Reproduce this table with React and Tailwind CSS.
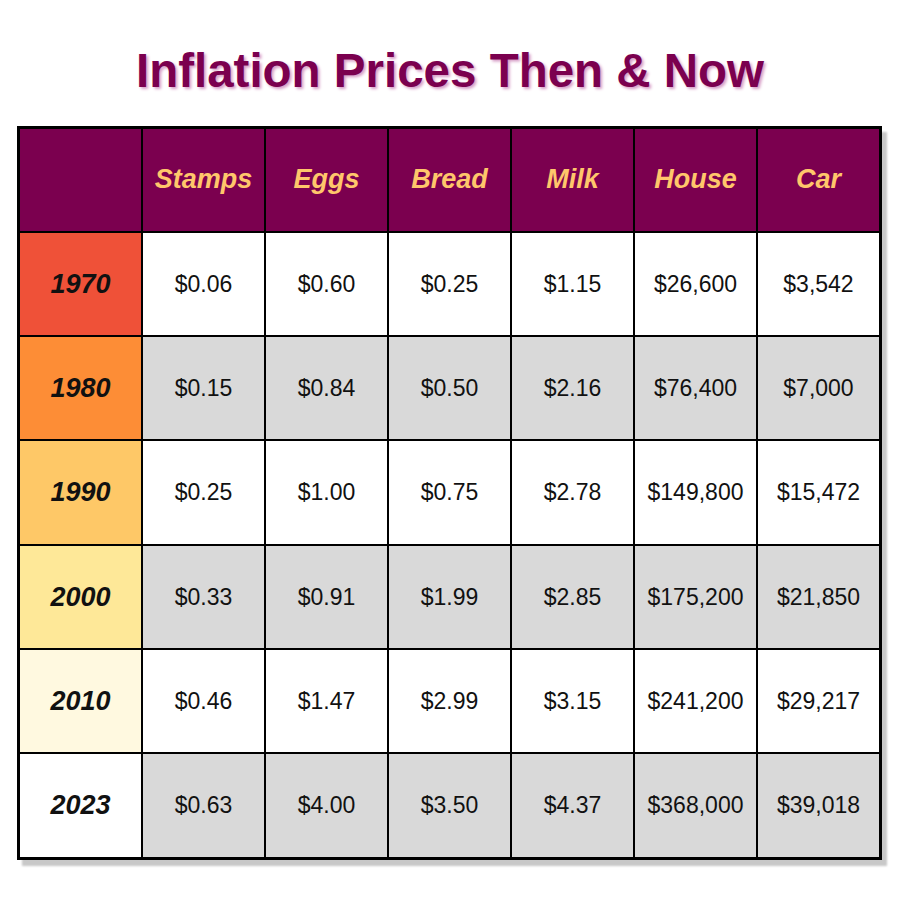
import React from "react";

const headers = ["Stamps", "Eggs", "Bread", "Milk", "House", "Car"];

const rows = [
  { year: "1970", bg: "bg-[#ef5138]", vals: ["$0.06", "$0.60", "$0.25", "$1.15", "$26,600", "$3,542"], gray: false },
  { year: "1980", bg: "bg-[#fd8d36]", vals: ["$0.15", "$0.84", "$0.50", "$2.16", "$76,400", "$7,000"], gray: true },
  { year: "1990", bg: "bg-[#fec867]", vals: ["$0.25", "$1.00", "$0.75", "$2.78", "$149,800", "$15,472"], gray: false },
  { year: "2000", bg: "bg-[#fee898]", vals: ["$0.33", "$0.91", "$1.99", "$2.85", "$175,200", "$21,850"], gray: true },
  { year: "2010", bg: "bg-[#fff9e0]", vals: ["$0.46", "$1.47", "$2.99", "$3.15", "$241,200", "$29,217"], gray: false },
  { year: "2023", bg: "bg-white", vals: ["$0.63", "$4.00", "$3.50", "$4.37", "$368,000", "$39,018"], gray: true },
];

export default function App() {
  return (
    <div className="w-[900px] h-[900px] bg-white font-['Liberation_Sans',Arial,sans-serif] pt-[47px]">
      <h1 className="text-center text-[47.5px] leading-none font-bold text-[#7b004f] [text-shadow:2px_2px_3px_#d79ec7]">
        Inflation Prices Then &amp; Now
      </h1>
      <div className="mt-[31px] ml-[17px] w-[865px] border-[3px] border-black bg-black shadow-[5px_6px_2px_#c8c8c8]">
        <div className="grid grid-cols-7 gap-[2px] auto-rows-[102.3px]">
          <div className="bg-[#7b004f]" />
          {headers.map((h) => (
            <div
              key={h}
              className="bg-[#7b004f] flex items-center justify-center text-[27px] font-bold italic text-[#ffc66b]"
            >
              {h}
            </div>
          ))}
          {rows.map((r) => (
            <React.Fragment key={r.year}>
              <div className={`${r.bg} flex items-center justify-center text-[27px] font-bold italic text-[#111111]`}>
                {r.year}
              </div>
              {r.vals.map((v, i) => (
                <div
                  key={i}
                  className={`${r.gray ? "bg-[#d9d9d9]" : "bg-white"} flex items-center justify-center text-[23px] text-[#111111]`}
                >
                  {v}
                </div>
              ))}
            </React.Fragment>
          ))}
        </div>
      </div>
    </div>
  );
}
